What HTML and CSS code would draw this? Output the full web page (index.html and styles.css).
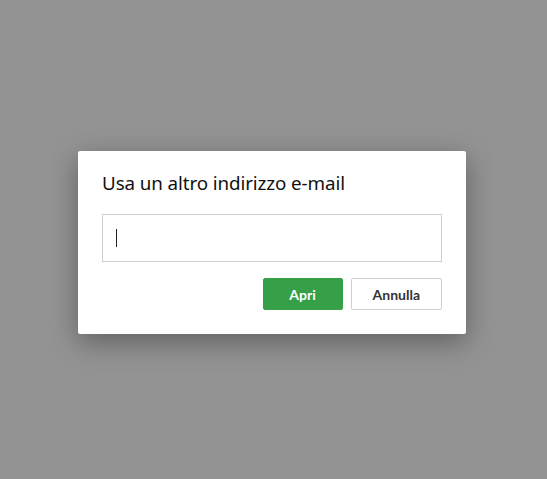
FILE: index.html
```html
<!DOCTYPE html>
<html lang="it">
<head>
<meta charset="UTF-8">
<title>Usa un altro indirizzo e-mail</title>
<link rel="stylesheet" href="styles.css">
</head>
<body>
<div class="overlay">
  <form class="dialog" onsubmit="return false;">
    <h1 class="title">Usa un altro indirizzo e-mail</h1>
    <div class="field"><span class="caret"></span></div>
    <div class="actions">
      <button class="btn primary" type="submit">Apri</button>
      <button class="btn" type="button">Annulla</button>
    </div>
  </form>
</div>
</body>
</html>
```
FILE: styles.css
```css
html,body{margin:0;padding:0;}
body{background:#939393;font-family:"Open Sans","Noto Sans",sans-serif;}
.overlay{width:547px;height:479px;padding:151px 0 0 78px;box-sizing:border-box;}
.dialog{
width:388px;height:183px;box-sizing:border-box;
background:#fff;border-radius:2px;
padding:18px 24px 0 24px;
box-shadow:0 8px 28px rgba(0,0,0,0.35);
}
.title{
margin:0;font-size:18.8px;font-weight:400;line-height:28px;color:#111;
font-family:"Noto Sans","Open Sans",sans-serif;letter-spacing:-0.1px;
}
.field{
margin-top:17px;height:48px;box-sizing:border-box;
border:1px solid #cfcfcf;display:flex;align-items:center;padding-left:13px;
}
.caret{width:1px;height:18px;background:#222;}
.actions{display:flex;justify-content:flex-end;gap:8px;margin-top:16px;}
.btn{
height:32px;min-width:80px;padding:0 21px;box-sizing:border-box;
border:1px solid #cfcfcf;background:#fff;border-radius:2px;
font-family:Lato,"Open Sans",sans-serif;font-weight:700;font-size:14px;color:#333;
}
.btn.primary{background:#35a047;border-color:#35a047;color:#fff;}
```
